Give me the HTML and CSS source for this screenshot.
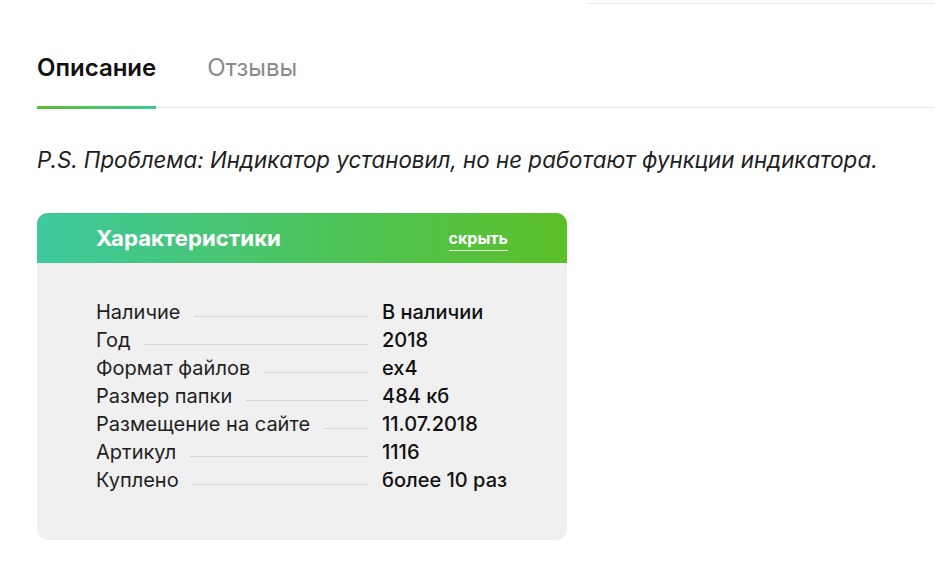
FILE: index.html
```html
<!DOCTYPE html>
<html lang="ru">
<head>
<meta charset="utf-8">
<title>Описание</title>
<link rel="stylesheet" href="styles.css">
</head>
<body>
<div class="topline"></div>
<main class="content">
  <nav class="tabs">
    <a class="tab tab-active">Описание</a>
    <a class="tab">Отзывы</a>
  </nav>
  <p class="note">P.S. Проблема: Индикатор установил, но не работают функции индикатора.</p>
  <section class="card">
    <header class="card-head">
      <h2 class="card-title">Характеристики</h2>
      <a class="card-toggle">скрыть</a>
    </header>
    <div class="card-body">
      <div class="row"><div class="label"><span>Наличие</span><i class="leader"></i></div><div class="value">В наличии</div></div>
      <div class="row"><div class="label"><span>Год</span><i class="leader"></i></div><div class="value">2018</div></div>
      <div class="row"><div class="label"><span>Формат файлов</span><i class="leader"></i></div><div class="value">ex4</div></div>
      <div class="row"><div class="label"><span>Размер папки</span><i class="leader"></i></div><div class="value">484 кб</div></div>
      <div class="row"><div class="label"><span>Размещение на сайте</span><i class="leader"></i></div><div class="value">11.07.2018</div></div>
      <div class="row"><div class="label"><span>Артикул</span><i class="leader"></i></div><div class="value">1116</div></div>
      <div class="row"><div class="label"><span>Куплено</span><i class="leader"></i></div><div class="value">более 10 раз</div></div>
    </div>
  </section>
</main>
</body>
</html>
```
FILE: styles.css
```css
* { box-sizing: border-box; }
html, body { margin: 0; padding: 0; background: #ffffff; }
body {
  font-family: Inter, "Noto Sans", "DejaVu Sans", sans-serif;
  color: #1b1b1b;
  width: 935px;
  overflow: hidden;
}
.topline {
  height: 1px;
  margin: 3px 0 0 588px;
  background: #e8e8e8;
}
.content {
  padding-left: 37px;
}
.tabs {
  display: flex;
  gap: 51px;
  margin-top: 51px;
  border-bottom: 1px solid #e9e9e9;
}
.tab {
  position: relative;
  display: block;
  font-size: 24px;
  line-height: 26px;
  padding-bottom: 26px;
  color: #8a8a8a;
  font-weight: 400;
}
.tab-active {
  color: #111111;
  font-weight: 600;
}
.tab-active::after {
  content: "";
  position: absolute;
  left: 0;
  right: 0;
  bottom: -2px;
  height: 3px;
  background: linear-gradient(90deg, #5bbf2e 0%, #3ec99c 100%);
}
.note {
  margin: 39px 0 0 0;
  font-size: 22.3px;
  line-height: 26px;
  font-style: italic;
  color: #1e1e1e;
}
.card {
  width: 530px;
  margin-top: 40px;
  border-radius: 11px;
  overflow: hidden;
  background: #f0f0f0;
}
.card-head {
  height: 50px;
  display: flex;
  align-items: center;
  justify-content: space-between;
  padding: 0 59px 0 59px;
  background: linear-gradient(90deg, #3ec99e 0%, #4dc45a 55%, #5bbf27 100%);
}
.card-title {
  margin: 0;
  font-size: 22.2px;
  line-height: 26px;
  font-weight: 700;
  color: #ffffff;
}
.card-toggle {
  display: block;
  font-size: 16px;
  line-height: 20px;
  font-weight: 700;
  color: #ffffff;
  border-bottom: 1px solid rgba(255,255,255,0.85);
  padding-bottom: 2px;
  margin-top: 2px;
}
.card-body {
  padding: 35px 59px 46px 59px;
}
.row {
  display: grid;
  grid-template-columns: 272px 1fr;
  gap: 14px;
  font-size: 20px;
  line-height: 28px;
}
.label {
  display: flex;
  color: #1f1f1f;
}
.leader {
  flex: 1;
  height: 1px;
  margin: 18px 0 0 14px;
  background: #d6d6d6;
}
.value {
  color: #111111;
  font-weight: 500;
}
```
